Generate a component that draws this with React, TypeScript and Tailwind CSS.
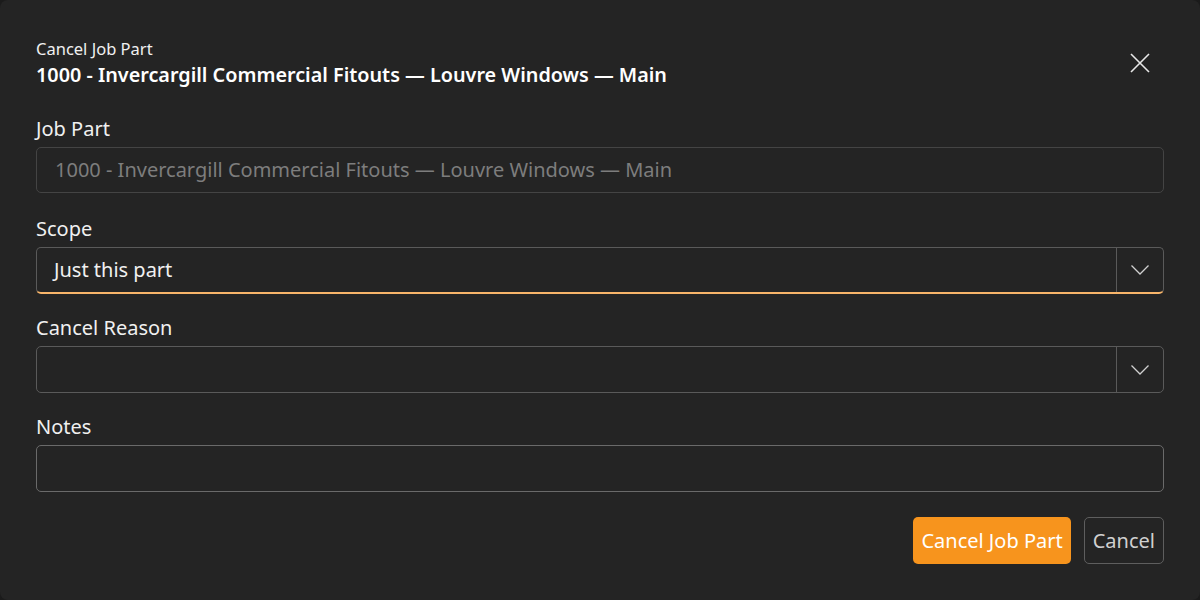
import React from "react";

const font = { fontFamily: '"Noto Sans", "Open Sans", sans-serif' };

function Chevron() {
  return (
    <svg width="20" height="12" viewBox="0 0 20 12" fill="none">
      <path d="M1.5 1.5 L10 10 L18.5 1.5" stroke="#d0d0d0" strokeWidth="1.3" />
    </svg>
  );
}

function Label({ children }: { children: React.ReactNode }) {
  return <div className="text-[20px] leading-[26px] text-[#f0f0f0] mb-[5px]">{children}</div>;
}

export default function App() {
  return (
    <div className="w-[1200px] h-[600px] bg-[#1b1b1b]" style={font}>
      <div className="w-full h-full bg-[#242424] rounded-[8px] px-[36px] pt-[37px] flex flex-col">
        <div className="flex justify-between items-start">
          <div>
            <div className="text-[16.5px] leading-[24px] text-[#f0f0f0]">Cancel Job Part</div>
            <div className="text-[19.8px] leading-[28px] font-semibold text-white">
              1000 - Invercargill Commercial Fitouts — Louvre Windows — Main
            </div>
          </div>
          <div className="mt-[16px] mr-[14px]">
            <svg width="20" height="20" viewBox="0 0 20 20">
              <path d="M1 1 L19 19 M19 1 L1 19" stroke="#e8e8e8" strokeWidth="1.6" />
            </svg>
          </div>
        </div>

        <div className="mt-[27px]">
          <Label>Job Part</Label>
          <div className="h-[46px] rounded-[5px] border border-[#444444] flex items-center px-[18px] text-[20px] text-[#7d7d7d]">
            1000 - Invercargill Commercial Fitouts — Louvre Windows — Main
          </div>
        </div>

        <div className="mt-[23px]">
          <Label>Scope</Label>
          <div className="h-[47px] rounded-[5px] border border-[#5a5a5a] border-b-[2px] border-b-[#f8b56a] flex items-stretch">
            <div className="flex-1 flex items-center px-[17px] text-[20px] text-[#f0f0f0]">Just this part</div>
            <div className="w-px bg-[#5a5a5a]" />
            <div className="w-[46px] flex items-center justify-center"><Chevron /></div>
          </div>
        </div>

        <div className="mt-[21px]">
          <Label>Cancel Reason</Label>
          <div className="h-[47px] rounded-[5px] border border-[#5a5a5a] flex items-stretch">
            <div className="flex-1" />
            <div className="w-px bg-[#5a5a5a]" />
            <div className="w-[46px] flex items-center justify-center"><Chevron /></div>
          </div>
        </div>

        <div className="mt-[21px]">
          <Label>Notes</Label>
          <div className="h-[47px] rounded-[5px] border border-[#6a6a6a]" />
        </div>

        <div className="flex justify-end gap-[13px] mt-[25px]">
          <div className="h-[47px] px-[8px] rounded-[5px] bg-[#f7941d] flex items-center text-[20px] text-white">
            Cancel Job Part
          </div>
          <div className="h-[47px] px-[8px] rounded-[5px] border border-[#5e5e5e] flex items-center text-[20px] text-[#d0d0d0]">
            Cancel
          </div>
        </div>
      </div>
    </div>
  );
}
